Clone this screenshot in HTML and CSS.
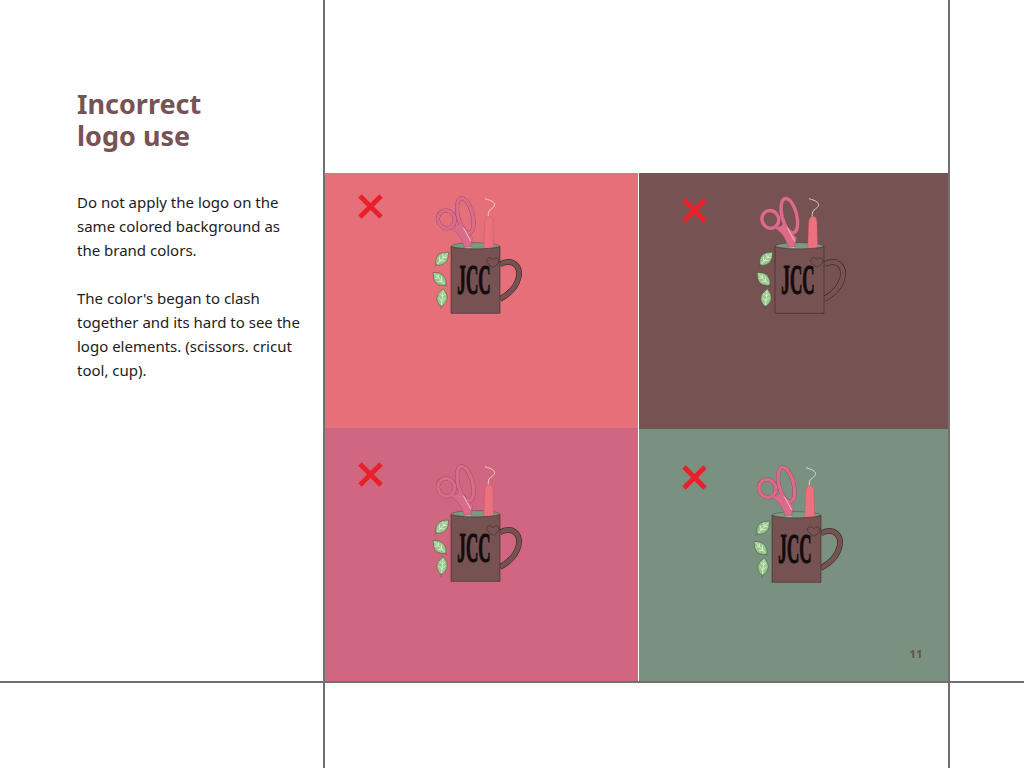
FILE: index.html
```html
<!DOCTYPE html>
<html lang="en">
<head>
<meta charset="utf-8">
<title>Incorrect logo use</title>
<link rel="stylesheet" href="styles.css">
</head>
<body>
<svg class="defs" width="0" height="0" aria-hidden="true">
  <defs>
    <symbol id="cross" viewBox="0 0 27 27">
      <path d="M3 3 L24 24 M24 3 L3 24" class="cross-stroke"/>
    </symbol>
    <g id="leaf">
      <path class="leaf-body" d="M0 0 C-8 -4 -20 -20 -14 -34 C-10 -44 -2 -50 3 -56 C12 -46 20 -34 16 -20 C13 -10 7 -3 0 0 Z"/>
      <path class="leaf-vein" d="M0 -4 C1 -18 2 -34 3 -50 M1 -16 L-9 -26 M1 -18 L11 -28 M2 -32 L-8 -40 M2 -32 L10 -40"/>
      <path class="leaf-stem" d="M0 0 L-2 8"/>
    </g>
    <symbol id="logo" viewBox="240 30 285 369">
      <ellipse class="inner" cx="376" cy="184" rx="73" ry="11"/>
      <g class="scissor-line">
        <ellipse cx="289" cy="103" rx="25" ry="27" transform="rotate(-20 289 103)"/>
        <ellipse cx="346" cy="92" rx="22" ry="53" transform="rotate(-14 346 92)"/>
      </g>
      <path class="scissor-arm" d="M303 126 C318 126 326 120 331 110 L338 128 L354 144 L368 158 L362 186 L342 186 C336 160 322 142 303 130 Z"/>
      <g class="scissor-ring">
        <ellipse cx="289" cy="103" rx="25" ry="27" transform="rotate(-20 289 103)"/>
        <ellipse cx="346" cy="92" rx="22" ry="53" transform="rotate(-14 346 92)"/>
      </g>
      <path class="blade" d="M340 128 L362 168 M344 190 L362 188"/>
      <path class="wire" d="M415 96 C414 84 416 76 424 72 C432 66 438 60 430 52 C424 46 414 44 405 41"/>
      <path class="tool" d="M401 196 L404 112 C405 100 410 94 417 94 C424 94 428 100 429 112 L431 196 Z"/>
      <path class="handle-line" d="M450 238 C490 218 512 245 506 276 C500 306 476 328 450 342"/>
      <path class="handle" d="M450 238 C490 218 512 245 506 276 C500 306 476 328 450 342"/>
      <path class="mug" d="M303 185 C340 194 415 194 450 185 L450 385 L303 385 Z"/>
      <text class="monogram" x="322" y="326" textLength="100" lengthAdjust="spacingAndGlyphs">JCC</text>
      <path class="heart" d="M429 247 C418 240 408 232 410 224 C413 216 424 216 428 224 C434 216 446 218 447 227 C447 235 438 242 429 247 Z"/>
      <use href="#leaf" transform="translate(259 240) rotate(40) scale(.95)"/>
      <use href="#leaf" transform="translate(287 300) rotate(-48) scale(.95)"/>
      <use href="#leaf" transform="translate(274 364) rotate(3) scale(.95)"/>
    </symbol>
  </defs>
</svg>

<main class="page">
  <section class="intro">
    <h1 class="title"><span class="title-line">Incorrect</span><span class="title-line">logo use</span></h1>
    <p class="copy">Do not apply the logo on the same colored background as the brand colors.</p>
    <p class="copy">The color's began to clash together and its hard to see the logo elements. (scissors. cricut tool, cup).</p>
  </section>

  <section class="board">
    <div class="panel panel-coral">
      <svg class="cross"><use href="#cross"/></svg>
      <svg class="logo"><use href="#logo"/></svg>
    </div>
    <div class="panel panel-brown">
      <svg class="cross"><use href="#cross"/></svg>
      <svg class="logo"><use href="#logo"/></svg>
    </div>
    <div class="panel panel-rose">
      <svg class="cross"><use href="#cross"/></svg>
      <svg class="logo"><use href="#logo"/></svg>
    </div>
    <div class="panel panel-sage">
      <svg class="cross"><use href="#cross"/></svg>
      <svg class="logo"><use href="#logo"/></svg>
      <span class="page-number">11</span>
    </div>
  </section>

  <div class="rule rule-left"></div>
  <div class="rule rule-right"></div>
  <div class="rule rule-bottom"></div>
</main>
</body>
</html>
```

FILE: styles.css
```css
* {
  box-sizing: border-box;
}

html,
body {
  margin: 0;
  background: #fff;
}

.defs {
  position: absolute;
}

.page {
  position: relative;
  display: grid;
  grid-template-columns: 324px 625px 75px;
  grid-template-rows: 768px;
  width: 1024px;
  height: 768px;
  overflow: hidden;
  font-family: "Noto Sans", sans-serif;
}

.intro {
  padding: 88px 20px 0 77px;
}

.title {
  margin: 0 0 38px;
  font-size: 27px;
  font-weight: 700;
  color: #765355;
}

.title-line {
  display: block;
  height: 32px;
  line-height: 32px;
}

.copy {
  margin: 0 0 24px;
  font-size: 15px;
  line-height: 24px;
  color: #1c1c1c;
}

.board {
  display: grid;
  grid-template-columns: 314px 310px;
  grid-template-rows: 255px 254px;
  column-gap: 1px;
  margin-top: 173px;
  height: 509px;
}

.panel {
  position: relative;
  display: flex;
  align-items: flex-start;
}

.panel-coral {
  padding-left: 33px;
  background: #e5707a;
}

.panel-brown {
  height: 256px;
  padding-left: 42px;
  background: #775253;
}

.panel-rose {
  padding-left: 33px;
  background: #d0667f;
}

.panel-sage {
  height: 253px;
  margin-top: 1px;
  padding-left: 42px;
  background: #7a9180;
}

.cross {
  flex: none;
  width: 27px;
  height: 27px;
}

.cross-stroke {
  fill: none;
  stroke: #e8202c;
  stroke-width: 4.8;
}

.logo {
  flex: none;
  width: 95px;
  height: 123px;
}

.panel-coral .cross { margin-top: 20px; }
.panel-coral .logo { margin: 22px 0 0 46px; }
.panel-brown .cross { margin-top: 24px; }
.panel-brown .logo { margin: 22px 0 0 46px; }
.panel-rose .cross { margin-top: 33px; }
.panel-rose .logo { margin: 35px 0 0 46px; }
.panel-sage .cross { margin-top: 35px; }
.panel-sage .logo { margin: 35px 0 0 43px; }

.scissor-line ellipse {
  fill: none;
  stroke: #7d4152;
  stroke-width: 12;
}

.scissor-ring ellipse {
  fill: none;
  stroke: #db6b8a;
  stroke-width: 10.5;
}

.scissor-arm {
  fill: #db6b8a;
  stroke: #8b4658;
  stroke-width: 1;
}

.blade {
  fill: none;
  stroke: #f3ece6;
  stroke-width: 2;
}

.wire {
  fill: none;
  stroke: #efe7e0;
  stroke-width: 2.4;
}

.tool {
  fill: #ea717d;
  stroke: #b84f5c;
  stroke-width: 1;
}

.inner {
  fill: #7a9a84;
  stroke: #2e1c1f;
  stroke-width: 1;
}

.handle-line {
  fill: none;
  stroke: #2e1c1f;
  stroke-width: 17;
}

.handle {
  fill: none;
  stroke: #775253;
  stroke-width: 14;
}

.mug {
  fill: #775253;
  stroke: #2e1c1f;
  stroke-width: 1.5;
}

.monogram {
  font-family: "Liberation Serif", serif;
  font-weight: 700;
  font-size: 126px;
  fill: #140b0c;
  stroke: #140b0c;
  stroke-width: 3.5;
}

.heart {
  fill: none;
  stroke: #2e1c1f;
  stroke-width: 1.5;
}

.leaf-body {
  fill: #9ac78c;
  stroke: #35553a;
  stroke-width: 1.5;
}

.leaf-vein {
  fill: none;
  stroke: #eef5e6;
  stroke-width: 2.2;
}

.leaf-stem {
  fill: none;
  stroke: #35553a;
  stroke-width: 1.5;
}

.page-number {
  position: absolute;
  right: 26px;
  bottom: 22px;
  font-size: 11px;
  line-height: 13px;
  font-weight: 700;
  letter-spacing: 0.5px;
  color: #65504f;
}

.rule {
  position: absolute;
  background: #707070;
}

.rule-left {
  top: 0;
  bottom: 0;
  left: 323px;
  width: 2px;
}

.rule-right {
  top: 0;
  bottom: 0;
  left: 948px;
  width: 2px;
}

.rule-bottom {
  left: 0;
  right: 0;
  top: 681px;
  height: 2px;
}
```
